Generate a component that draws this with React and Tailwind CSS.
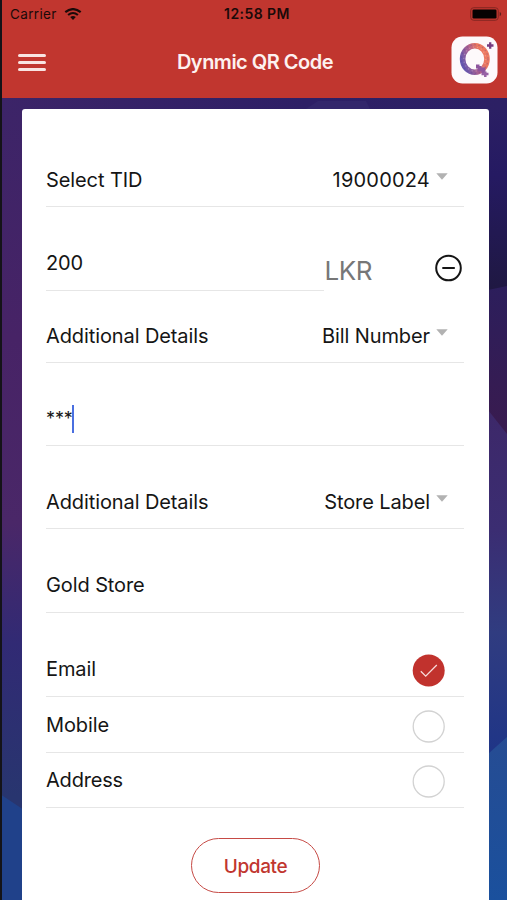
import React from 'react';

function Backdrop() {
  return (
    <svg className="absolute inset-0 h-[900px] w-[507px]" viewBox="0 0 507 900" aria-hidden="true">
      <defs>
        <linearGradient id="left" x1="0" y1="98" x2="0" y2="900" gradientUnits="userSpaceOnUse">
          <stop offset="0" stopColor="#3c2468" />
          <stop offset="0.3" stopColor="#472366" />
          <stop offset="0.53" stopColor="#4a2768" />
          <stop offset="0.68" stopColor="#312a74" />
          <stop offset="0.87" stopColor="#28356f" />
        </linearGradient>
        <linearGradient id="rightTop" x1="0" y1="98" x2="0" y2="290" gradientUnits="userSpaceOnUse">
          <stop offset="0" stopColor="#2c2064" />
          <stop offset="0.4" stopColor="#251a62" />
          <stop offset="1" stopColor="#1f1842" />
        </linearGradient>
        <linearGradient id="rightMid" x1="0" y1="286" x2="0" y2="430" gradientUnits="userSpaceOnUse">
          <stop offset="0" stopColor="#2c1e5c" />
          <stop offset="1" stopColor="#391b4f" />
        </linearGradient>
        <linearGradient id="rightLow" x1="0" y1="410" x2="0" y2="752" gradientUnits="userSpaceOnUse">
          <stop offset="0" stopColor="#3d2869" />
          <stop offset="0.35" stopColor="#3b2d72" />
          <stop offset="0.65" stopColor="#303c80" />
          <stop offset="1" stopColor="#1f3587" />
        </linearGradient>
        <linearGradient id="blue" x1="0" y1="736" x2="0" y2="900" gradientUnits="userSpaceOnUse">
          <stop offset="0" stopColor="#264c93" />
          <stop offset="1" stopColor="#1a509d" />
        </linearGradient>
        <linearGradient id="top" x1="0" x2="507" y1="0" y2="0" gradientUnits="userSpaceOnUse">
          <stop offset="0" stopColor="#3c2468" />
          <stop offset="0.6" stopColor="#2d1f66" />
          <stop offset="1" stopColor="#2c2064" />
        </linearGradient>
      </defs>
      <path fill="url(#left)" d="M0 98h250v802H0z" />
      <path fill="#20418a" d="M0 794l30 20v86H0z" />
      <path fill="url(#rightTop)" d="M450 98h57v195h-57z" />
      <path fill="url(#rightMid)" d="M450 298l57-12v154h-57z" />
      <path fill="url(#rightLow)" d="M450 378l38 32 19 24v320h-57z" />
      <path fill="url(#blue)" d="M450 780l38-26 19-17v163h-57z" />
      <rect y="98" width="507" height="12" fill="url(#top)" />
      <path fill="#32266b" d="M306 109l12-8h48l4 8z" />
    </svg>
  );
}

function AppLogo() {
  return (
    <svg className="h-[48px] w-[47px]" viewBox="0 0 47 48" aria-hidden="true">
      <defs>
        <linearGradient id="q" x1="0" y1="0.7" x2="1" y2="0.25">
          <stop offset="0" stopColor="#6658b0" />
          <stop offset="0.45" stopColor="#b0628f" />
          <stop offset="0.75" stopColor="#ea7660" />
          <stop offset="1" stopColor="#ee7c62" />
        </linearGradient>
      </defs>
      <rect x="0.5" y="0.5" width="46" height="47" rx="11" fill="#fdf9fb" />
      <ellipse cx="23.8" cy="23" rx="12.2" ry="13.3" fill="none" stroke="url(#q)" strokeWidth="5.6" />
      <ellipse cx="23.8" cy="23" rx="13.2" ry="14.3" fill="none" stroke="#513b8c" strokeOpacity="0.3" strokeWidth="1.2" strokeDasharray="1.5 2.5" />
      <ellipse cx="23.8" cy="23" rx="11" ry="12" fill="none" stroke="#fff" strokeOpacity="0.25" strokeWidth="1.2" strokeDasharray="1.2 2.8" />
      <path d="M25 30.500h3.500M28.500 30v3.500h4v3.500" fill="none" stroke="#8d559e" strokeWidth="3.800" />
      <path d="M30.500 38h7M34.300 35.500v5.500" stroke="#9862a5" strokeWidth="2.500" />
      <path d="M36 9.500h6.500M39.200 6.300v6.500" stroke="#773c80" strokeWidth="2.300" />
    </svg>
  );
}

function Wifi() {
  return (
    <svg className="h-[12px] w-[18px]" viewBox="0 0 18 12" fill="none" stroke="#1b0a09" aria-hidden="true">
      <path d="M1.300 4.200Q9-2 16.700 4.200" strokeWidth="2.200" />
      <path d="M4.100 7Q9 3 13.900 7" strokeWidth="2.100" />
      <path d="M9 12L6.200 9Q9 6.900 11.800 9z" fill="#1b0a09" stroke="none" />
    </svg>
  );
}

function Row({ height, label, labelClass = '', children, line = 'w-full' }) {
  return (
    <div className={`flex flex-col justify-end ${height}`}>
      <div className="flex h-[53px] items-center justify-between">
        <span className={`whitespace-nowrap ${labelClass}`}>{label}</span>
        {children}
      </div>
      <div className={`h-px bg-[#e6e6e6] ${line}`} />
    </div>
  );
}

function Dropdown({ value, valueClass = '' }) {
  return (
    <div className="flex items-center gap-[6px] pr-[16px]">
      <span className={`whitespace-nowrap ${valueClass}`}>{value}</span>
      <svg className="mb-[6px] h-[7px] w-[12px]" viewBox="0 0 12 7" aria-hidden="true">
        <path d="M0.300 0.200h11.400L6 6.700z" fill="#b2b2b2" />
      </svg>
    </div>
  );
}

function Check({ on }) {
  return (
    <div className="mr-[19px] pt-px">
      <svg className="h-[33px] w-[33px]" viewBox="0 0 33 33" fill="none" aria-hidden="true">
        {on ? (
          <>
            <circle cx="16.700" cy="16.500" r="16" fill="#c1322d" />
            <path d="M8.800 17.200l4.900 4.900L24.800 11" stroke="#f7dcdb" strokeWidth="1.300" />
          </>
        ) : (
          <circle cx="16.700" cy="16.500" r="15.500" fill="#fff" stroke="#d2d2d2" strokeWidth="1.300" />
        )}
      </svg>
    </div>
  );
}

export default function App() {
  return (
    <div className="relative h-[900px] w-[507px] overflow-hidden bg-[#2c2064] font-['Inter','Liberation_Sans',sans-serif]">
      <Backdrop />
      <div className="relative flex h-full flex-col border-l-2 border-[#141318]">
        <header className="h-[98px] shrink-0 bg-[#c1362f]">
          <div className="grid h-[27px] grid-cols-3 items-center pl-[8px] pr-[5px] text-[#1b0a09]">
            <div className="flex items-center gap-[7px] pt-px">
              <span className="text-[13.500px] tracking-[0.35px]">Carrier</span>
              <Wifi />
            </div>
            <span className="whitespace-nowrap pl-[2px] text-center text-[14px] font-semibold tracking-[0.45px]">12:58 PM</span>
            <div className="flex justify-end">
              <svg className="h-[14px] w-[32px]" viewBox="0 0 32 14" aria-hidden="true">
                <rect x="0.700" y="0.700" width="27.600" height="12.600" rx="3" fill="none" stroke="#852722" />
                <rect x="2.500" y="2.500" width="24" height="9" rx="1.300" fill="#070202" />
                <path d="M29.700 5v4.200q1.500-.5 1.500-2.100T29.700 5" fill="#60201c" />
              </svg>
            </div>
          </div>
          <div className="flex h-[68px] items-center justify-between pl-[16px] pr-[9px]">
            <div className="mt-[3px] flex w-[42px] flex-col gap-[4px]">
              <div className="h-[3px] w-[28px] rounded bg-[#f9e4e2]" />
              <div className="h-[3px] w-[28px] rounded bg-[#f9e4e2]" />
              <div className="h-[3px] w-[28px] rounded bg-[#f9e4e2]" />
            </div>
            <h1 className="whitespace-nowrap pr-px pt-[2px] text-[20px] font-semibold tracking-[-0.5px] text-[#fdf1f0]">Dynmic QR Code</h1>
            <div className="-mt-[2px]"><AppLogo /></div>
          </div>
        </header>

        <main className="ml-[20px] mt-[11px] w-[467px] flex-1 rounded-t-[3px] bg-white pl-[24px] pr-[25px] text-[20px] leading-[24px] tracking-[-0.1px] text-[#151515]">
          <Row height="h-[98px]" label="Select TID">
            <Dropdown value="19000024" valueClass="tracking-[0.2px]" />
          </Row>
          <Row height="h-[84px]" label="200" labelClass="pb-[2px]" line="w-[278px]">
            <div className="flex items-center gap-[63px] pr-px pt-[9px]">
              <span className="pt-[6px] text-[26px] tracking-[-0.5px] text-[#777777]">LKR</span>
              <svg className="h-[28px] w-[28px]" viewBox="0 0 28 28" fill="none" stroke="#151515" strokeWidth="2" aria-hidden="true">
                <circle cx="13.500" cy="14" r="12.300" />
                <path d="M7.300 14h12.500" />
              </svg>
            </div>
          </Row>
          <Row height="h-[72px]" label="Additional Details">
            <Dropdown value="Bill Number" />
          </Row>
          <Row
            height="h-[83px]"
            label={<span className="flex items-center"><span className="text-[18px]">***</span><span className="-ml-px h-[28px] w-[2px] bg-[#4a6fe0]" /></span>}
          />
          <Row height="h-[83px]" label="Additional Details">
            <Dropdown value="Store Label" />
          </Row>
          <Row height="h-[84px]" label="Gold Store" labelClass="pb-[2px]" />
          <Row height="h-[84px]" label="Email" labelClass="pb-[2px]"><Check on /></Row>
          <Row height="h-[56px]" label="Mobile" labelClass="pb-[2px]"><Check /></Row>
          <Row height="h-[55px]" label="Address" labelClass="pb-[2px] tracking-[-0.2px]"><Check /></Row>
          <div className="flex justify-center pl-px pt-[30px]">
            <button className="h-[55px] w-[129px] rounded-full border-[1.500px] border-[#c64a45] pt-[2px] text-[19px] font-medium tracking-[-0.4px] text-[#c1362f]">Update</button>
          </div>
        </main>
      </div>
    </div>
  );
}
